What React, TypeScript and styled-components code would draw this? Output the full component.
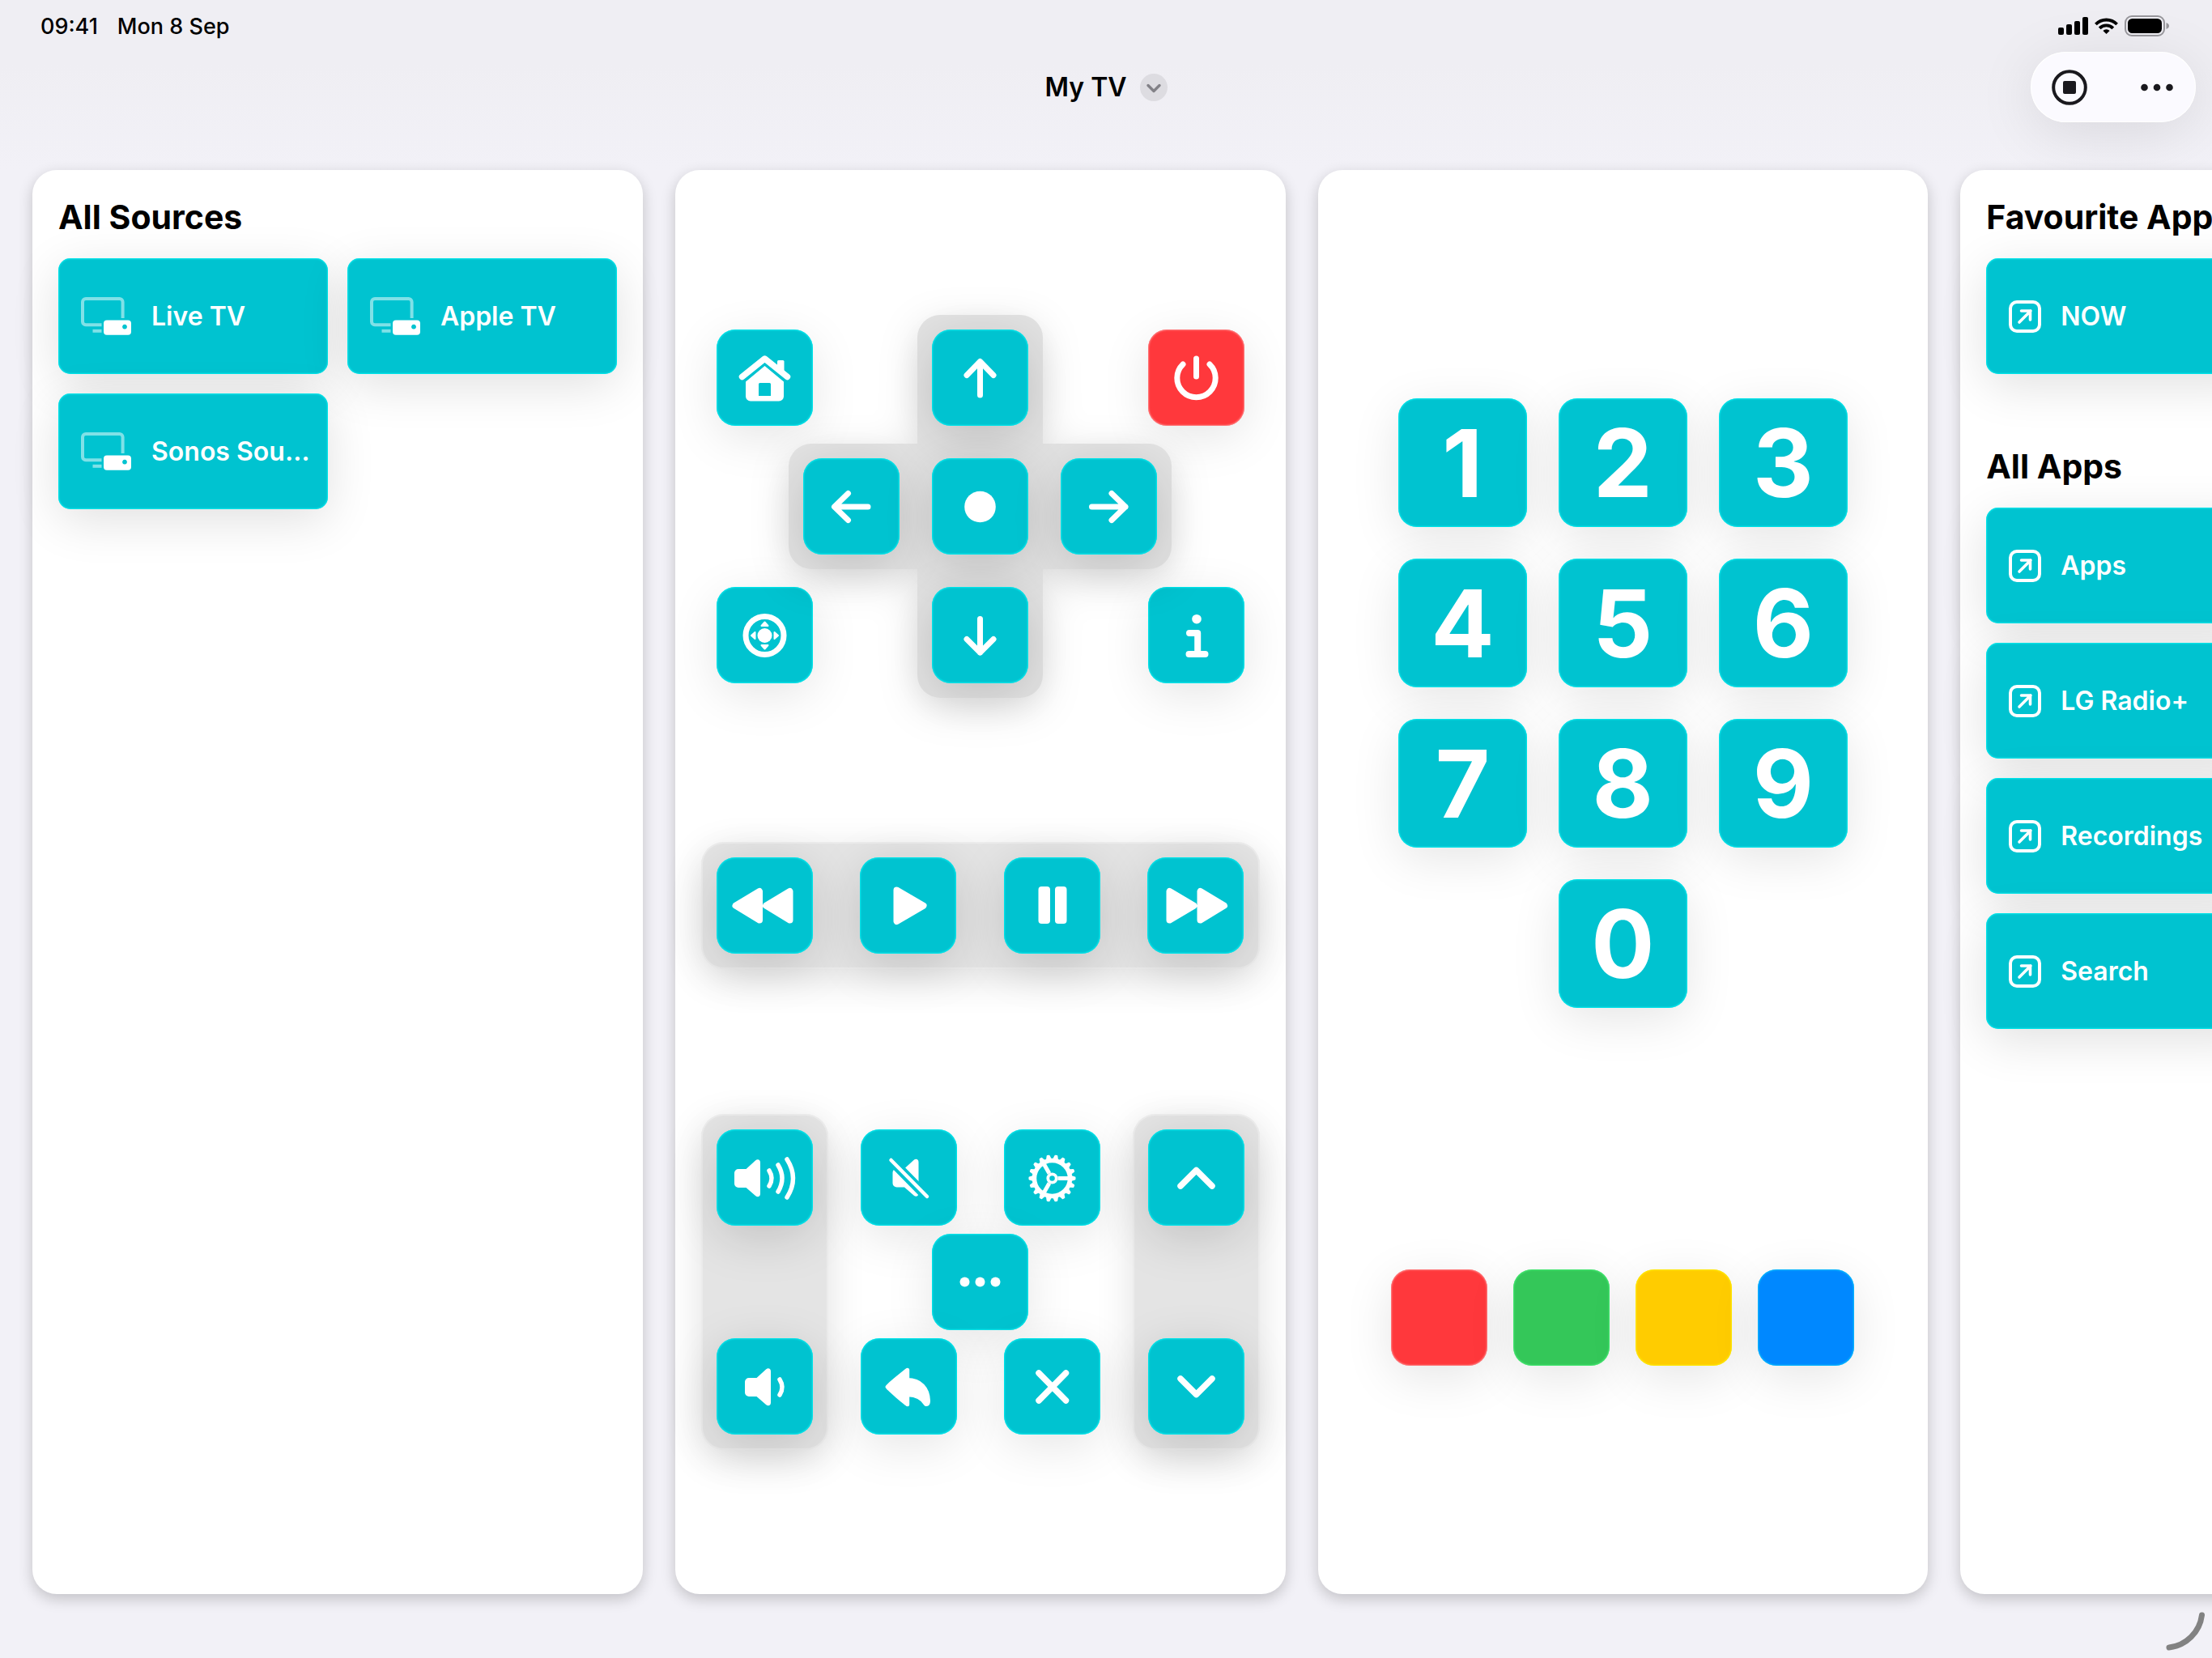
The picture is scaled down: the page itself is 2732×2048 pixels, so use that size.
import React from "react";
import styled, { createGlobalStyle } from "styled-components";

const TEAL = "#00c3d0";
const TEAL_EDGE = "rgba(0, 255, 255, 0.7)";
const RED = "#ff383c";
const RED_EDGE = "rgba(255, 170, 170, 0.7)";

const GlobalStyle = createGlobalStyle`
  * { box-sizing: border-box; }
  body {
    margin: 0;
    background: #f2f1f7;
    color: #000;
    font-family: Inter, "Liberation Sans", sans-serif;
  }
  button { font: inherit; color: inherit; border: 0; padding: 0; cursor: pointer; }
  svg { display: block; }
`;

const Page = styled.div`
  position: relative;
  display: flex;
  flex-direction: column;
  min-height: 100vh;
  overflow: hidden;
  background: linear-gradient(#efeef3 0, #efeef3 80px, #f2f1f7 210px);
`;

const StatusBar = styled.div`
  display: flex;
  align-items: center;
  justify-content: space-between;
  height: 64px;
  padding: 0 52px 0 50px;
  font-size: 27px;
  font-weight: 500;
`;

const StatusGroup = styled.div<{ $gap: number }>`
  display: flex;
  align-items: center;
  gap: ${(p) => p.$gap}px;
`;

const NavBar = styled.header`
  display: grid;
  grid-template-columns: 1fr auto 1fr;
  align-items: center;
  padding: 0 20px;
`;

const DeviceButton = styled.button`
  grid-column: 2;
  display: flex;
  align-items: center;
  gap: 16px;
  background: none;
  font-size: 32px;
  font-weight: 600;
  line-height: 44px;
`;

const Actions = styled.div`
  justify-self: end;
  display: flex;
  justify-content: space-between;
  width: 204px;
  padding: 0 4px;
  border-radius: 44px;
  background: #fbfaff;
  box-shadow: inset 0 0 0 1px #fff, 0 12px 72px rgba(0, 0, 0, 0.1);
`;

const ActionButton = styled.button`
  display: grid;
  place-items: center;
  width: 88px;
  height: 87px;
  background: none;
`;

const Board = styled.main`
  flex: 1;
  display: flex;
  gap: 40px;
  padding: 59px 0 79px 40px;
`;

const Panel = styled.section<{ $gap?: number; $spread?: boolean }>`
  flex: 0 0 28%;
  display: flex;
  flex-direction: column;
  align-items: ${(p) => (p.$spread ? "center" : "stretch")};
  justify-content: ${(p) => (p.$spread ? "space-evenly" : "flex-start")};
  gap: ${(p) => p.$gap ?? 0}px;
  padding: ${(p) => (p.$spread ? "0 32px" : "32px")};
  border-radius: 30px;
  background: #fff;
  box-shadow: 0 6px 18px rgba(0, 0, 0, 0.2);
`;

const Section = styled.div`
  display: flex;
  flex-direction: column;
  gap: 24px;
`;

const Heading = styled.h2`
  margin: 0;
  font-size: 41px;
  font-weight: 700;
  line-height: 53px;
  white-space: nowrap;
`;

const Tiles = styled.div<{ $columns: number }>`
  display: grid;
  grid-template-columns: repeat(${(p) => p.$columns}, calc(50% - 12px));
  gap: 24px;
`;

const Tile = styled.button`
  display: flex;
  align-items: center;
  gap: 24px;
  height: 143px;
  padding: 0 24px 0 28px;
  border-radius: 15px;
  background: ${TEAL};
  color: #fff;
  font-size: 32px;
  font-weight: 600;
  white-space: nowrap;
  box-shadow: inset 0 0 2px 1px ${TEAL_EDGE}, 0 14px 60px rgba(0, 0, 0, 0.12);

  svg { flex: none; }
`;

const Key = styled.button<{ $color?: string; $edge?: string; $size?: number; $soft?: boolean }>`
  display: grid;
  place-items: center;
  width: ${(p) => p.$size ?? 119}px;
  height: ${(p) => p.$size ?? 119}px;
  border-radius: 23px;
  background: ${(p) => p.$color ?? TEAL};
  color: #fff;
  font-size: 116px;
  font-weight: 700;
  line-height: 1;
  box-shadow: inset 0 0 2px 1px ${(p) => p.$edge ?? TEAL_EDGE},
    0 14px 60px rgba(0, 0, 0, ${(p) => (p.$soft ? 0.1 : 0.15)});
`;

const DirectionPad = styled.div`
  align-self: stretch;
  display: grid;
  grid-template-columns: 1fr auto 1fr;
  padding: 0 19px;
`;

const SideKeys = styled.div<{ $end?: boolean }>`
  display: flex;
  flex-direction: column;
  justify-content: space-between;
  align-items: ${(p) => (p.$end ? "flex-end" : "flex-start")};
  padding: 18px 0;
`;

const Cross = styled.div`
  display: grid;
  grid-template-columns: repeat(3, 119px);
  grid-template-rows: repeat(3, 119px);
  gap: 40px;
  padding: 18px;
  margin: 0 -60px;
  isolation: isolate;
  filter: drop-shadow(0 12px 24px rgba(0, 0, 0, 0.12));
`;

const Arm = styled.div<{ $vertical?: boolean }>`
  grid-row: ${(p) => (p.$vertical ? "1 / 4" : "2")};
  grid-column: ${(p) => (p.$vertical ? "2" : "1 / 4")};
  margin: -18px;
  border-radius: 28px;
  background: #e2e2e2;
  z-index: -1;
`;

const Cell = styled.div<{ $row: number; $col: number }>`
  grid-row: ${(p) => p.$row};
  grid-column: ${(p) => p.$col};
`;

const KeyGroup = styled.div<{ $vertical?: boolean }>`
  display: flex;
  flex-direction: ${(p) => (p.$vertical ? "column" : "row")};
  align-self: stretch;
  justify-content: space-between;
  padding: 19px;
  border-radius: 28px;
  background: #e4e4e4;
  box-shadow: inset 0 0 0 2px rgba(255, 255, 255, 0.3), 0 12px 48px rgba(0, 0, 0, 0.12);
`;

const Controls = styled.div`
  align-self: stretch;
  display: flex;
  justify-content: space-between;
`;

const Middle = styled.div`
  display: flex;
  flex-direction: column;
  gap: 10px;
  width: 296px;
  padding: 19px 0;
`;

const MiddleRow = styled.div<{ $center?: boolean }>`
  display: flex;
  justify-content: ${(p) => (p.$center ? "center" : "space-between")};
`;

const Keypad = styled.div`
  display: grid;
  grid-template-columns: repeat(3, 159px);
  gap: 39px;

  > :last-child { grid-column: 2; }
`;

const ColorRow = styled.div`
  display: flex;
  gap: 32px;
`;

const ResizeCorner = styled.svg`
  position: absolute;
  right: 8px;
  bottom: 8px;
`;

const Glyph = ({ children }: { children: React.ReactNode }) => (
  <svg width="119" height="119" viewBox="0 0 119 119" fill="#fff" aria-hidden="true">
    {children}
  </svg>
);

const Line = ({ d, w = 7 }: { d: string; w?: number }) => (
  <path d={d} fill="none" stroke="#fff" strokeWidth={w} strokeLinecap="round" strokeLinejoin="round" />
);

const Solid = ({ d, w = 8 }: { d: string; w?: number }) => (
  <path d={d} stroke="#fff" strokeWidth={w} strokeLinejoin="round" />
);

const SPEAKER =
  "M27 49h9.5l11.5-10.5c2.5-2.3 6-1.5 6 2.5v38.5c0 4-3.5 4.8-6 2.5L36.5 72H27a5 5 0 0 1-5-5V54a5 5 0 0 1 5-5z";

const HomeIcon = () => (
  <Glyph>
    <path d="M75 39.5a1.500 1.500 0 0 1 1.500-1.500h5.500a1.500 1.500 0 0 1 1.500 1.500V58L75 50z" />
    <Line d="M31.500 58.500 L59.500 36 L87.500 58.500" w={7.500} />
    <path
      fillRule="evenodd"
      d="M59.5 45L83 64.5V82.5a6 6 0 0 1-6 6H42a6 6 0 0 1-6-6V64.5ZM53.5 66a1.5 1.5 0 0 0-1.5 1.5V82H67V67.5a1.5 1.5 0 0 0-1.5-1.5Z"
    />
  </Glyph>
);

const PowerIcon = () => (
  <Glyph>
    <Line d="M59.5 36V58" />
    <Line d="M43 43A23.7 23.7 0 1 0 76 43" />
  </Glyph>
);

const NavigatorIcon = () => (
  <Glyph>
    <circle cx="59.5" cy="60" r="23.5" fill="none" stroke="#fff" strokeWidth="7" />
    <circle cx="59.5" cy="60" r="9" />
    {[0, 90, 180, 270].map((a) => (
      <path
        key={a}
        transform={`rotate(${a} 59.5 60)`}
        d="M59.5 43.5l4 4.5h-8z"
        stroke="#fff"
        strokeWidth="2"
        strokeLinejoin="round"
      />
    ))}
  </Glyph>
);

const InfoIcon = () => (
  <Glyph>
    <circle cx="60" cy="39.7" r="5.8" />
    <Line d="M51 57H61.2V83M50.5 83H70.5" w={8} />
  </Glyph>
);

const GearIcon = () => (
  <Glyph>
    <g transform="translate(59.5 60.5)" fill="none" stroke="#fff">
      <circle r="22" strokeWidth="5.5" />
      <circle r="5.2" strokeWidth="3.8" />
      {[0, 120, 240].map((a) => (
        <path key={a} d="M7 0H21" strokeWidth="5" transform={`rotate(${a})`} />
      ))}
      {Array.from({ length: 18 }, (_, i) => (
        <path
          key={i}
          d="M24 -2.3L28 -1V1L24 2.3z"
          strokeWidth="2"
          strokeLinejoin="round"
          fill="#fff"
          transform={`rotate(${i * 20})`}
        />
      ))}
    </g>
  </Glyph>
);

const MuteIcon = () => (
  <Glyph>
    <path d={SPEAKER} transform="translate(17.5 -0.5)" />
    <path d="M32 32.5L88 89.5" stroke={TEAL} strokeWidth="12" />
    <Line d="M37.5 38L82 83" w={4.5} />
  </Glyph>
);

const BackIcon = () => (
  <Glyph>
    <Solid
      w={5}
      d="M57.7 39.2C57 39.5 33.5 58.5 33 60.2C33.5 62 57 81.5 57.7 81.7V69.8C68 69.5 75 72.5 80.5 81.5C83.5 82 83.500 79 83.500 77C83 62 74 51.5 57.7 51.5Z"
    />
  </Glyph>
);

const Dots = ({ gap, r, size, color }: { gap: number; r: number; size: number; color: string }) => (
  <svg width={size} height={size} viewBox={`0 0 ${size} ${size}`} fill={color} aria-hidden="true">
    {[-1, 0, 1].map((i) => (
      <circle key={i} cx={size / 2 + i * gap} cy={size / 2} r={r} />
    ))}
  </svg>
);

const SourceIcon = () => (
  <svg width="63" height="47" viewBox="0 0 63 47" fill="none" aria-hidden="true">
    <g stroke="#fff" strokeWidth="4" opacity="0.5">
      <path d="M25.5 34.2H6a4 4 0 0 1-4-4V6a4 4 0 0 1 4-4h41.600a4 4 0 0 1 4 4v20" />
      <path d="M14.5 41.8H25.5" />
    </g>
    <path
      fill="#fff"
      fillRule="evenodd"
      d="M32 28.600H58a4 4 0 0 1 4 4V42.700a4 4 0 0 1-4 4H32a4 4 0 0 1-4-4V32.600a4 4 0 0 1 4-4z M54 33.800a2.900 2.900 0 1 0 0.010 0z"
    />
  </svg>
);

const AppIcon = () => (
  <svg width="40" height="40" viewBox="0 0 40 40" fill="none" stroke="#fff" strokeWidth="4" aria-hidden="true">
    <rect x="2" y="2" width="36" height="36" rx="8" />
    <path
      d="M13 27L27 13M15.5 13H26.5V24"
      strokeWidth="3.6"
      strokeLinecap="round"
      strokeLinejoin="round"
    />
  </svg>
);

const SignalIcon = () => (
  <svg width="37" height="22" viewBox="0 0 37 22" aria-hidden="true">
    <rect x="0" y="13" width="7" height="9" rx="2" />
    <rect x="10" y="9" width="7" height="13" rx="2" />
    <rect x="20" y="5" width="7" height="17" rx="2" />
    <rect x="30" y="0" width="7" height="22" rx="2" />
  </svg>
);

const WifiIcon = () => (
  <svg width="29" height="20" viewBox="0 0 29 20" fill="none" stroke="#000" strokeWidth="3.8" aria-hidden="true">
    <path d="M1.4 8A18.3 18.3 0 0 1 27.6 8" />
    <path d="M6.2 12.8A11.6 11.6 0 0 1 22.8 12.8" />
    <path d="M14.5 20L10.4 16A5.8 5.8 0 0 1 18.6 16Z" fill="#000" stroke="none" />
  </svg>
);

const BatteryIcon = () => (
  <svg width="56" height="26" viewBox="0 0 56 26" aria-hidden="true">
    <rect x="1" y="1" width="48" height="24" rx="8" fill="none" stroke="#98979c" strokeWidth="2" />
    <rect x="4" y="4" width="42" height="18" rx="5.5" />
    <path d="M51.5 9c2 .8 3.5 2 3.5 4s-1.5 3.2-3.5 4z" fill="#98979c" />
  </svg>
);

const KEYS = ["1", "2", "3", "4", "5", "6", "7", "8", "9", "0"];
const SOURCES = ["Live TV", "Apple TV", "Sonos Sou…"];
const FAVOURITES = ["NOW"];
const APPS = ["Apps", "LG Radio+", "Recordings", "Search"];
const COLORS = [
  { name: "Red", color: RED, edge: RED_EDGE },
  { name: "Green", color: "#34c759", edge: "rgba(80, 255, 130, 0.7)" },
  { name: "Yellow", color: "#ffcc00", edge: "rgba(255, 255, 0, 0.7)" },
  { name: "Blue", color: "#0088ff", edge: "rgba(0, 220, 255, 0.7)" },
];

type TileSectionProps = {
  title: string;
  names: string[];
  columns: number;
  icon: React.ReactNode;
};

const TileSection = ({ title, names, columns, icon }: TileSectionProps) => (
  <Section>
    <Heading>{title}</Heading>
    <Tiles $columns={columns}>
      {names.map((name) => (
        <Tile type="button" key={name}>
          {icon}
          <span>{name}</span>
        </Tile>
      ))}
    </Tiles>
  </Section>
);

export default function App() {
  return (
    <Page>
      <GlobalStyle />
      <StatusBar>
        <StatusGroup $gap={24}>
          <span>09:41</span>
          <span>Mon 8 Sep</span>
        </StatusGroup>
        <StatusGroup $gap={8}>
          <SignalIcon />
          <WifiIcon />
          <BatteryIcon />
        </StatusGroup>
      </StatusBar>

      <NavBar>
        <DeviceButton type="button">
          <span>My TV</span>
          <svg width="34" height="34" viewBox="0 0 34 34" aria-hidden="true">
            <circle cx="17" cy="17" r="17" fill="#dddce1" />
            <path
              d="M10 14.5L17 21.5L24 14.5"
              fill="none"
              stroke="#828187"
              strokeWidth="3.4"
              strokeLinecap="round"
              strokeLinejoin="round"
            />
          </svg>
        </DeviceButton>
        <Actions>
          <ActionButton type="button" aria-label="Stop">
            <svg width="44" height="44" viewBox="0 0 44 44" aria-hidden="true">
              <circle cx="22" cy="22" r="19.8" fill="none" stroke="#1a191e" strokeWidth="4" />
              <rect x="14" y="14" width="16" height="16" rx="2" fill="#1a191e" />
            </svg>
          </ActionButton>
          <ActionButton type="button" aria-label="More options">
            <Dots gap={15.5} r={4.3} size={44} color="#1a191e" />
          </ActionButton>
        </Actions>
      </NavBar>

      <Board>
        <Panel>
          <TileSection title="All Sources" names={SOURCES} columns={2} icon={<SourceIcon />} />
        </Panel>

        <Panel $spread>
          <DirectionPad>
            <SideKeys>
              <Key type="button" $soft aria-label="Home"><HomeIcon /></Key>
              <Key type="button" $soft aria-label="Navigator"><NavigatorIcon /></Key>
            </SideKeys>
            <Cross>
              <Arm $vertical />
              <Arm />
              <Cell $row={1} $col={2}>
                <Key type="button" aria-label="Up">
                  <Glyph><Line d="M59.5 81V40M43 56.5L59.5 39.5L76 56.5" /></Glyph>
                </Key>
              </Cell>
              <Cell $row={2} $col={1}>
                <Key type="button" aria-label="Left">
                  <Glyph><Line d="M80 60H39M55.5 43.5L38.5 60L55.5 76.5" /></Glyph>
                </Key>
              </Cell>
              <Cell $row={2} $col={2}>
                <Key type="button" aria-label="Select">
                  <Glyph><circle cx="59.5" cy="60" r="19.3" /></Glyph>
                </Key>
              </Cell>
              <Cell $row={2} $col={3}>
                <Key type="button" aria-label="Right">
                  <Glyph><Line d="M38.5 60H80M63 43.5L80 60L63 76.5" /></Glyph>
                </Key>
              </Cell>
              <Cell $row={3} $col={2}>
                <Key type="button" aria-label="Down">
                  <Glyph><Line d="M59.5 39.5V81M43 64.5L59.5 81L76 64.5" /></Glyph>
                </Key>
              </Cell>
            </Cross>
            <SideKeys $end>
              <Key type="button" $soft aria-label="Power" $color={RED} $edge={RED_EDGE}><PowerIcon /></Key>
              <Key type="button" $soft aria-label="Info"><InfoIcon /></Key>
            </SideKeys>
          </DirectionPad>

          <KeyGroup>
            <Key type="button" aria-label="Rewind">
              <Glyph><Solid d="M23.5 59.7L53 42V77.5ZM61 59.7L90.5 42V77.5Z" /></Glyph>
            </Key>
            <Key type="button" aria-label="Play">
              <Glyph><Solid d="M45.5 40.5L78.5 59.7L45.5 79Z" /></Glyph>
            </Key>
            <Key type="button" aria-label="Pause">
              <Glyph>
                <rect x="42.5" y="36" width="14.5" height="46" rx="4" />
                <rect x="63" y="36" width="14.5" height="46" rx="4" />
              </Glyph>
            </Key>
            <Key type="button" aria-label="Fast forward">
              <Glyph><Solid d="M57.5 59.7L27.5 42V77.5ZM95 59.7L65.5 42V77.5Z" /></Glyph>
            </Key>
          </KeyGroup>

          <Controls>
            <KeyGroup $vertical>
              <Key type="button" aria-label="Volume up">
                <Glyph>
                  <path d={SPEAKER} />
                  <Line d="M65 51Q71 60.5 65 70M76 44Q86 60.5 76 77M87 37Q102 60.5 87 84" w={5.5} />
                </Glyph>
              </Key>
              <Key type="button" aria-label="Volume down">
                <Glyph>
                  <path d={SPEAKER} transform="translate(13 0)" />
                  <Line d="M78 51Q84 60.5 78 70" w={5.5} />
                </Glyph>
              </Key>
            </KeyGroup>
            <Middle>
              <MiddleRow>
                <Key type="button" $soft aria-label="Mute"><MuteIcon /></Key>
                <Key type="button" $soft aria-label="Settings"><GearIcon /></Key>
              </MiddleRow>
              <MiddleRow $center>
                <Key type="button" $soft aria-label="More">
                  <Dots gap={19} r={6} size={119} color="#fff" />
                </Key>
              </MiddleRow>
              <MiddleRow>
                <Key type="button" $soft aria-label="Back"><BackIcon /></Key>
                <Key type="button" $soft aria-label="Exit">
                  <Glyph><Line d="M43 43L76.5 77M76.5 43L43 77" w={7.5} /></Glyph>
                </Key>
              </MiddleRow>
            </Middle>
            <KeyGroup $vertical>
              <Key type="button" aria-label="Channel up">
                <Glyph><Line d="M40 70L59.5 50.5L79 70" w={7.5} /></Glyph>
              </Key>
              <Key type="button" aria-label="Channel down">
                <Glyph><Line d="M40 50L59.5 69.5L79 50" w={7.5} /></Glyph>
              </Key>
            </KeyGroup>
          </Controls>
        </Panel>

        <Panel $spread $gap={40}>
          <Keypad>
            {KEYS.map((k) => (
              <Key type="button" $soft key={k} $size={159}>{k}</Key>
            ))}
          </Keypad>
          <ColorRow>
            {COLORS.map((c) => (
              <Key type="button" $soft key={c.name} aria-label={c.name} $color={c.color} $edge={c.edge} />
            ))}
          </ColorRow>
        </Panel>

        <Panel $gap={88}>
          <TileSection title="Favourite Apps" names={FAVOURITES} columns={1} icon={<AppIcon />} />
          <TileSection title="All Apps" names={APPS} columns={1} icon={<AppIcon />} />
        </Panel>
      </Board>

      <ResizeCorner width="50" height="50" viewBox="0 0 50 50" aria-hidden="true">
        <path d="M45.5 5A46 46 0 0 1 5 45" fill="none" stroke="#828282" strokeWidth="7" strokeLinecap="round" />
      </ResizeCorner>
    </Page>
  );
}
